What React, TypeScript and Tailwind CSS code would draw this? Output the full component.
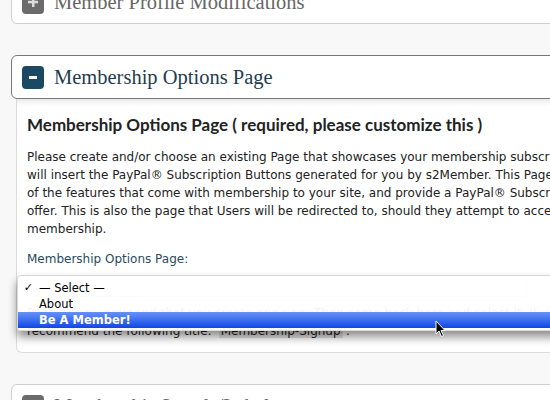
import React from "react";

const serif = { fontFamily: "'Liberation Serif', 'DejaVu Serif', serif" };
const sans = { fontFamily: "'DejaVu Sans', 'Lucida Grande', sans-serif" };
const heading = { fontFamily: "Lato, 'DejaVu Sans', sans-serif" };

function Icon({ minus, dark }: { minus?: boolean; dark?: boolean }) {
  return (
    <div
      className={`w-[22px] h-[23px] rounded-[4px] flex items-center justify-center shrink-0 ${
        dark ? "bg-[#1b4862]" : "bg-[#6b6b6b]"
      }`}
    >
      {minus ? (
        <div className="w-[8px] h-[3px] bg-white" />
      ) : (
        <svg width="10" height="10" viewBox="0 0 10 10">
          <rect x="4" y="0" width="2.5" height="10" fill="#ddd" />
          <rect x="0" y="3.8" width="10" height="2.5" fill="#ddd" />
        </svg>
      )}
    </div>
  );
}

export default function App() {
  return (
    <div className="w-[550px] h-[400px] overflow-hidden bg-[#f8f8f8] relative" style={sans}>
      {/* top collapsed panel */}
      <div className="ml-[11px] w-[600px] h-[44px] -mt-[20px] bg-white border border-[#cfcfcf] rounded-[6px] flex items-center pl-[10px] gap-[10px]">
        <Icon />
        <span className="text-[20.5px] text-[#666] leading-none" style={serif}>
          Member Profile Modifications
        </span>
      </div>

      {/* active panel */}
      <div className="mt-[31px] ml-[11px] w-[600px] h-[44px] bg-white border border-[#777] rounded-[6px] flex items-center pl-[10px] gap-[10px] relative z-10">
        <Icon minus dark />
        <span className="text-[20.5px] text-[#1f3d4f] leading-none" style={serif}>
          Membership Options Page
        </span>
      </div>
      <div className="ml-[16px] w-[600px] h-[254px] bg-white border border-t-0 border-[#dcdcdc] rounded-b-[6px] pl-[10px] pt-[16px] shadow-[inset_0_6px_6px_-4px_rgba(0,0,0,0.12)] overflow-hidden">
        <div className="text-[17px] font-bold text-[#222] leading-[20px] whitespace-nowrap" style={heading}>
          Membership Options Page ( required, please customize this )
        </div>
        <div className="mt-[13px] text-[12px] leading-[18px] text-[#222] whitespace-nowrap">
          Please create and/or choose an existing Page that showcases your membership subscription options. This is where you
          <br />
          will insert the PayPal® Subscription Buttons generated for you by s2Member. This Page should also include a brief
          <br />
          of the features that come with membership to your site, and provide a PayPal® Subscription Button for each Level
          <br />
          offer. This is also the page that Users will be redirected to, should they attempt to access an area of your site
          <br />
          membership.
        </div>
        <div className="mt-[13px] text-[12px] leading-[16px] text-[#2b4a5d]">Membership Options Page:</div>
        <div className="mt-[8px] h-[22px] w-[500px] border border-[#bbb] rounded-[3px] bg-white" />
        <div className="mt-[7px] text-[12px] leading-[18px] text-[#222] whitespace-nowrap">
          Page, we recommend that you create one now. Then come back here and select it. If you need a suggestion, we
          <br />
          recommend the following title: '<span className="bg-[#e4e4e4] px-[2px]">Membership-Signup</span>'.
        </div>
      </div>

      {/* bottom collapsed panel */}
      <div className="mt-[31px] ml-[11px] w-[600px] h-[44px] bg-white border border-[#cfcfcf] rounded-[6px] flex items-center pl-[10px] gap-[10px]">
        <Icon />
        <span className="text-[20.5px] text-[#666] leading-none" style={serif}>
          Membership Levels/Labels
        </span>
      </div>

      {/* dropdown menu */}
      <div className="absolute left-[17px] top-[275px] w-[560px] h-[56px] bg-white/95 rounded-[4px] shadow-[0_6px_10px_rgba(0,0,0,0.45)] border border-[#d8d8d8] pt-[4px] text-[11.5px] leading-[16px] text-black">
        <div className="h-[16px] flex items-center">
          <span className="w-[21px] text-right pr-[6px] text-[11px]">✓</span>
          <span>— Select —</span>
        </div>
        <div className="h-[16px] flex items-center pl-[21px]">About</div>
        <div className="h-[16px] flex items-center pl-[21px] text-white font-bold bg-gradient-to-b from-[#6891f8] to-[#0d46e4]">
          Be A Member!
        </div>
      </div>

      {/* cursor */}
      <svg className="absolute left-[435px] top-[320px]" width="12" height="18" viewBox="0 0 12 18">
        <path d="M1 1 L1 14 L4 11 L6.5 16.5 L8.5 15.6 L6 10.5 L10 10.5 Z" fill="#000" stroke="#fff" strokeWidth="1" />
      </svg>
    </div>
  );
}
